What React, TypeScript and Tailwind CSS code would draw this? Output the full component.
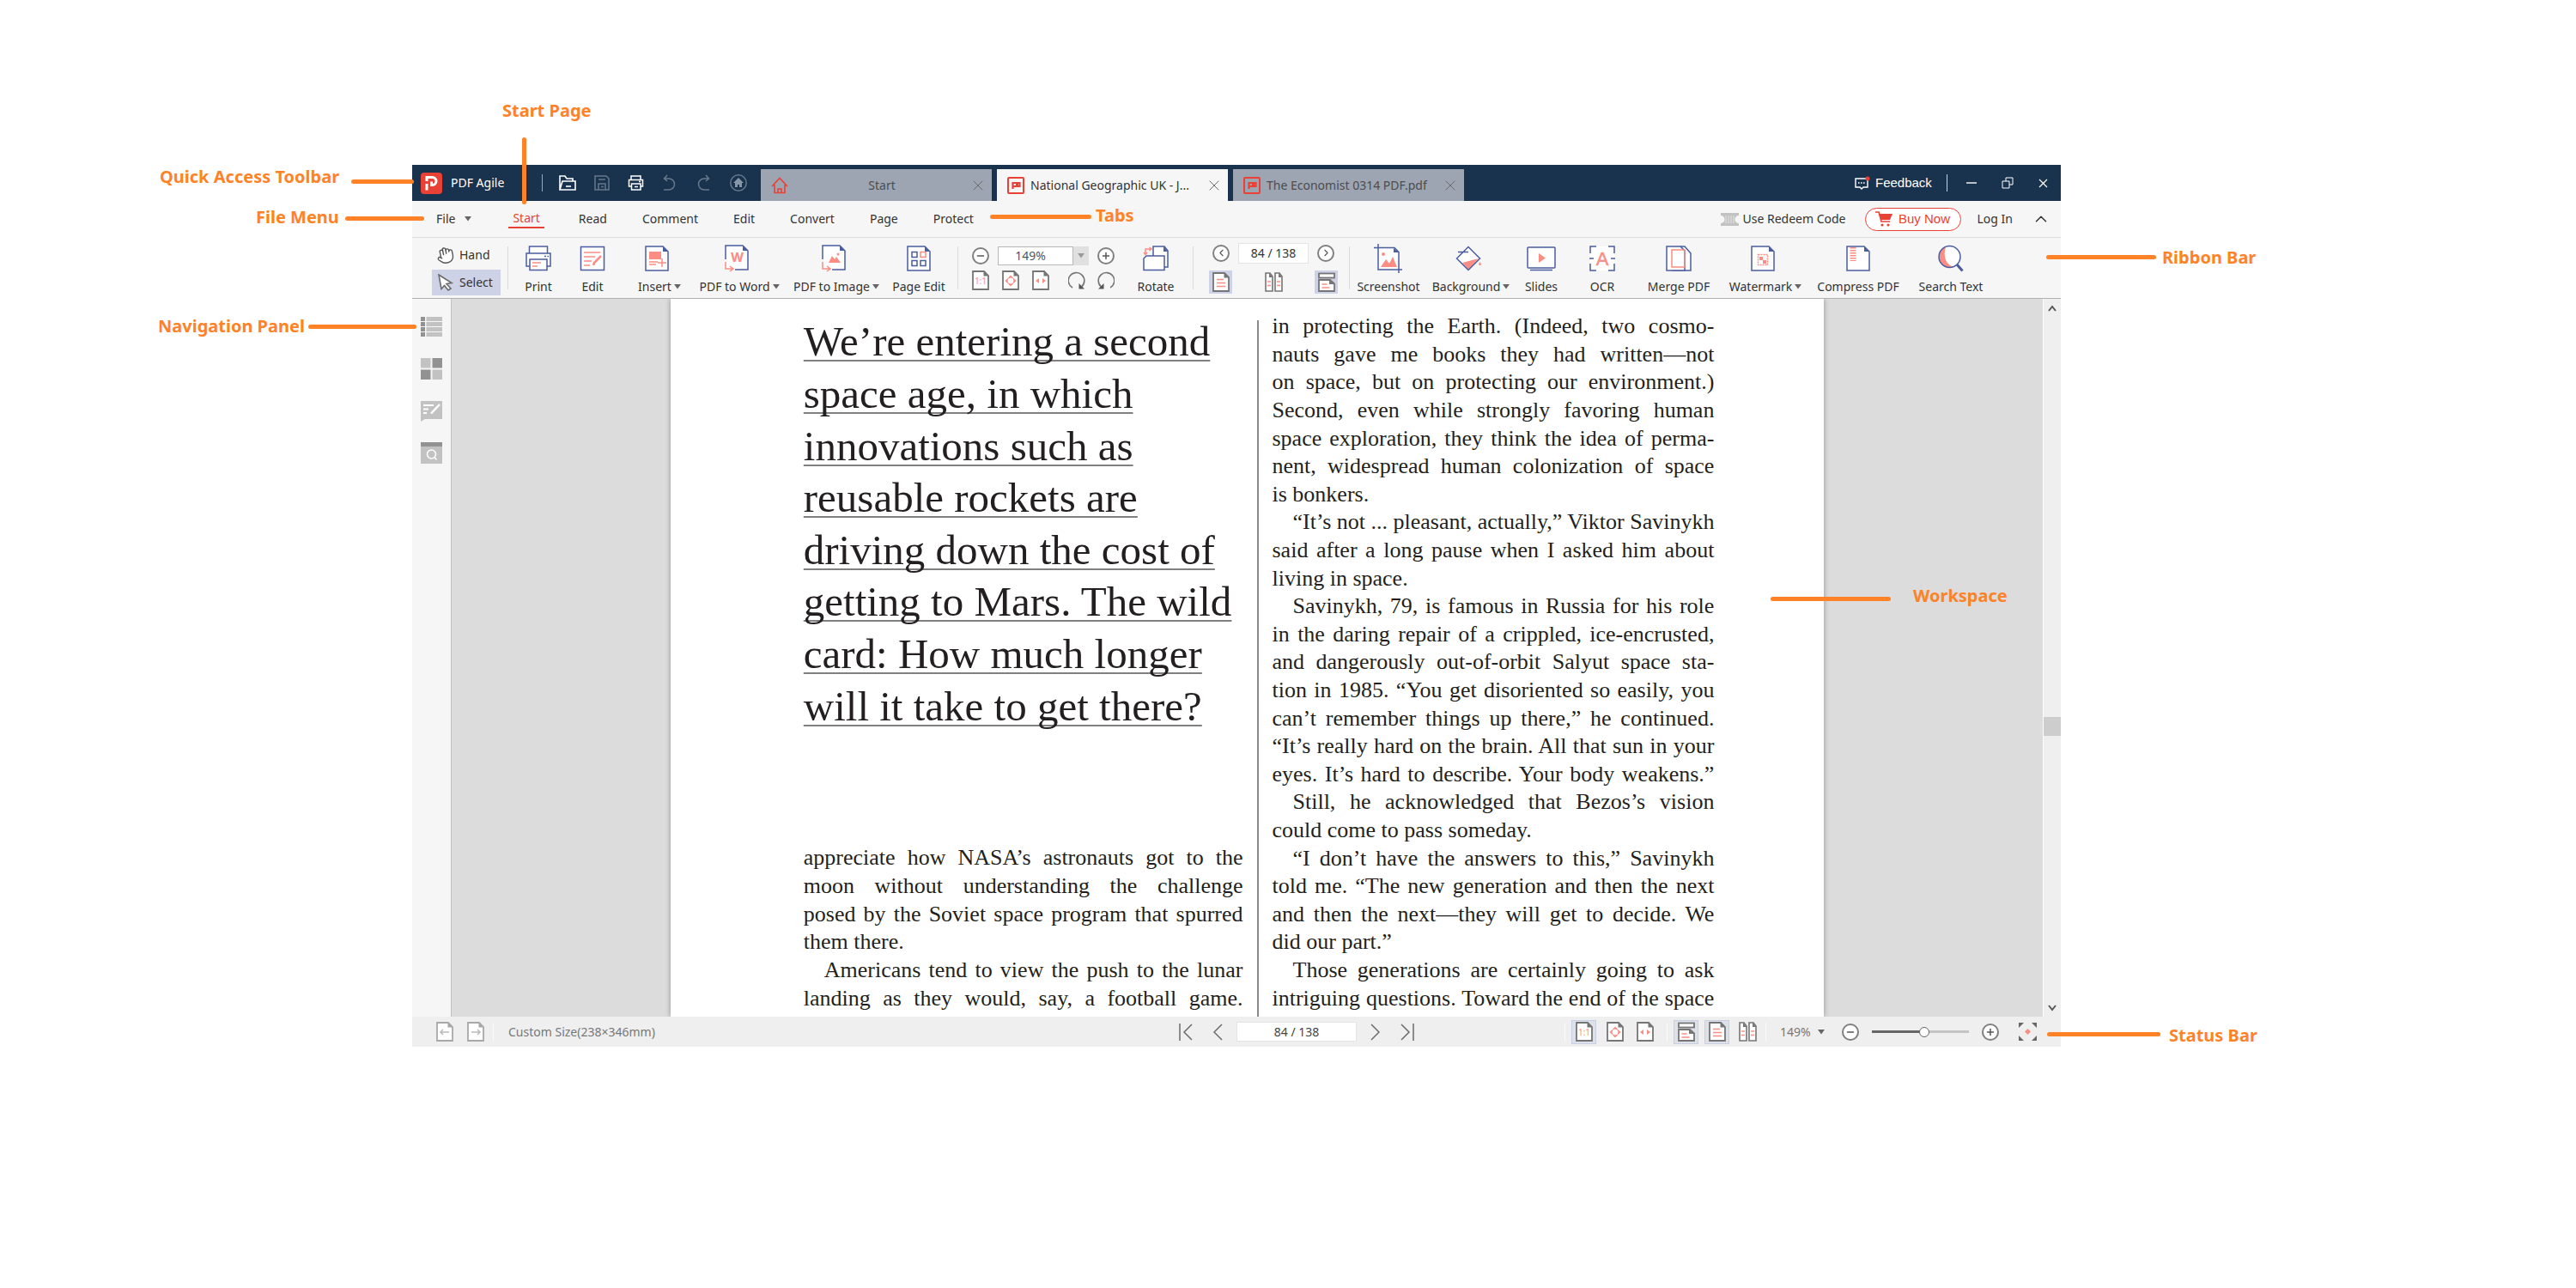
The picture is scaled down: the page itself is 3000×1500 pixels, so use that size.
import React from 'react';
import { ChevronLeft, ChevronRight, ChevronUp, Hand, Minus, Plus, X } from 'lucide-react';

const BLUE = '#4a5d9e';
const PINK = '#fb8d84';
const GREY = '#757575';

type IconProps = { w?: number; h?: number; className?: string; children?: React.ReactNode };

const Svg = ({ w = 30, h = 30, className = '', children }: IconProps) => (
  <svg width={w} height={h} viewBox={`0 0 ${w} ${h}`} fill="none" className={`shrink-0 ${className}`} aria-hidden="true">
    {children}
  </svg>
);

const Caret = ({ className = 'text-[#666]' }: { className?: string }) => (
  <Svg w={8} h={6} className={className}>
    <path d="M0 0h8L4 5.5z" fill="currentColor" />
  </Svg>
);

/* ---------- ribbon icons ---------- */

const BluePage = ({ children }: { children?: React.ReactNode }) => (
  <Svg>
    <path d="M2 1h20l6 6v22H2z" fill="#fff" stroke={BLUE} strokeWidth="1.5" />
    <path d="M22 1v6h6z" fill={BLUE} />
    {children}
  </Svg>
);

const ConvertPage = ({ children }: { children: React.ReactNode }) => (
  <Svg h={32}>
    <path d="M2 17V1h20l6 6v22H13" fill="#fff" stroke={BLUE} strokeWidth="1.5" />
    <path d="M2 17h1v12h10" fill="#fff" />
    <path d="M22 1v6h6z" fill={BLUE} />
    {children}
    <path d="M2 20v8h8M7 25l4 3-4 3" stroke={PINK} strokeWidth="1.5" />
  </Svg>
);

const icons: Record<string, React.ReactNode> = {
  print: (
    <Svg>
      <path d="M4.500 9V1h21v8" fill="#fff" stroke={BLUE} strokeWidth="1.5" />
      <rect x="1" y="9" width="28" height="15" fill="#fff" stroke={BLUE} strokeWidth="1.5" />
      <rect x="5" y="16" width="20" height="12.5" fill="#fff" stroke={BLUE} strokeWidth="1.5" />
      <path d="M8 20h10M8 24h6" stroke={PINK} strokeWidth="1.5" />
      <path d="M22 12.5h2M25.5 12.5h1.5" stroke={BLUE} strokeWidth="1.5" />
    </Svg>
  ),
  edit: (
    <Svg>
      <rect x="1.5" y="1.5" width="27" height="27" fill="#fff" stroke={BLUE} strokeWidth="1.5" />
      <path d="M5 8h19M5 13h13M5 18h9M5 23h7" stroke={PINK} strokeWidth="1.5" />
      <path d="M16 23l1-3 8-8" stroke={PINK} strokeWidth="2.5" />
    </Svg>
  ),
  insert: (
    <BluePage>
      <path d="M6 7h14v9H6z" fill={PINK} />
      <path d="M6 19h10M6 22h8M21 15v10M16 20h10" stroke={PINK} strokeWidth="1.5" />
    </BluePage>
  ),
  word: (
    <ConvertPage>
      <text x="15.5" y="20" textAnchor="middle" fontSize="15" fontWeight="700" fill={PINK} fontFamily="Inter, sans-serif">W</text>
    </ConvertPage>
  ),
  image: (
    <ConvertPage>
      <path d="M9 21l4-8 3 4 2-3 5 7z" fill={PINK} />
      <circle cx="20" cy="11" r="1.5" fill={PINK} />
    </ConvertPage>
  ),
  pageEdit: (
    <BluePage>
      <path d="M7 7.5h6v6H7zM7 17.5h6v6H7zM17 17.5h6v6h-6z" stroke={BLUE} strokeWidth="1.5" />
      <path d="M17 7.5h6v6h-6z" stroke={PINK} strokeWidth="1.5" />
    </BluePage>
  ),
  rotate: (
    <Svg>
      <path d="M12 12V1h13l4 5v19H17" fill="#fff" stroke={BLUE} strokeWidth="1.5" />
      <path d="M24 1v6h5z" fill={BLUE} />
      <path d="M1 28.5V15l3-3h21v16.5z" fill="#fff" stroke={BLUE} strokeWidth="1.5" />
      <path d="M3 10V4h6M1 8l2 2.5L5 8M7.5 2L10 4 7.500 6" stroke={PINK} strokeWidth="1.5" />
    </Svg>
  ),
  screenshot: (
    <Svg w={34} h={34}>
      <path d="M5 5h18l6 6v19H5z" fill="#fff" />
      <path d="M5 0v30h28M0 4.500h24l5 5V34" stroke={BLUE} strokeWidth="1.5" />
      <path d="M23 5v5h6z" fill={BLUE} />
      <path d="M8 27l6-9 4 5 4-8 5 12z" fill={PINK} />
      <circle cx="11" cy="12" r="2" fill={PINK} />
    </Svg>
  ),
  background: (
    <Svg>
      <path d="M1 15L15 1l14 14-14 14z" fill="#fff" />
      <path d="M8 20l19-5-12 13z" fill={PINK} />
      <path d="M1.5 15L15 1.5 28.5 15 15 28.5zM3 7.5h12" stroke={BLUE} strokeWidth="1.5" />
      <path d="M28.500 19c2 3 1.5 4 0 4s-2-1 0-4z" fill={PINK} />
    </Svg>
  ),
  slides: (
    <Svg w={34}>
      <rect x="1" y="2" width="32" height="24" rx="1" fill="#fff" stroke={BLUE} strokeWidth="1.5" />
      <path d="M4 28.5h26" stroke={BLUE} strokeWidth="1.5" />
      <path d="M14 9v11l8-5.5z" fill={PINK} />
    </Svg>
  ),
  ocr: (
    <Svg>
      <path d="M1 1h28v28H1z" fill="#fff" />
      <path d="M1 9V1h7M22 1h7v8M29 21v8h-7M8 29H1v-8M0 15h5M25 15h5" stroke={BLUE} strokeWidth="1.5" />
      <text x="15" y="23" textAnchor="middle" fontSize="22" fill={PINK} stroke={PINK} strokeWidth="0.5" fontFamily="Liberation Sans, sans-serif">A</text>
    </Svg>
  ),
  merge: (
    <Svg>
      <path d="M7 29h22V9l-7-8h-5" fill="#fff" stroke={BLUE} strokeWidth="1.5" />
      <path d="M1 1h16l5 5v23H1z" fill="#fff" stroke={BLUE} strokeWidth="1.5" />
      <path d="M7 5h15v20H7z" stroke={PINK} strokeWidth="1.5" />
    </Svg>
  ),
  watermark: (
    <BluePage>
      <path d="M9.500 10.500h11v12h-11z" stroke={PINK} strokeWidth="1.5" strokeDasharray="2 1" />
      <path d="M11 13h4v4h-4zM15 17h4v4h-4z" fill={PINK} />
    </BluePage>
  ),
  compress: (
    <BluePage>
      <path d="M9 2v16" stroke={PINK} strokeWidth="7" strokeDasharray="1.5 1.5" />
    </BluePage>
  ),
  search: (
    <Svg h={32}>
      <circle cx="13" cy="14" r="12.5" fill="#fff" />
      <path d="M9 2a12.5 12.5 0 1 0 9 23.5C11 24 5 16 9 2z" fill={PINK} />
      <circle cx="13.5" cy="14" r="12.5" stroke={BLUE} strokeWidth="1.5" />
      <path d="M22 23l6.5 7.5" stroke={BLUE} strokeWidth="3" />
    </Svg>
  ),
};

/* ---------- small grey icons ---------- */

const SmallPage = ({ children, muted = false }: { children: React.ReactNode; muted?: boolean }) => (
  <Svg w={20} h={23}>
    <path d="M1 1h13l5 5v16H1z" fill="#fff" stroke={muted ? '#a8a8a8' : GREY} strokeWidth="1.8" />
    <path d="M13.500 1v5.500H19z" fill={muted ? '#a8a8a8' : GREY} />
    {children}
  </Svg>
);

const ActualSize = () => (
  <SmallPage>
    <text x="10" y="16" textAnchor="middle" fontSize="10" fill={PINK} fontFamily="Noto Sans, sans-serif">1:1</text>
  </SmallPage>
);

const FitPage = () => (
  <SmallPage>
    <circle cx="10" cy="12" r="4" stroke={PINK} />
    <path d="M10 5.500l2.500 2.500h-5zM10 18.500L7.500 16h5zM3.500 12L6 9.500v5zM16.500 12L14 9.500v5z" fill={PINK} />
  </SmallPage>
);

const FitWidth = () => (
  <SmallPage>
    <path d="M4 12l4-3v6zM16 12l-4-3v6z" fill={PINK} />
  </SmallPage>
);

const SinglePage = () => (
  <SmallPage>
    <path d="M5 8.500h8M5 12.500h10M5 16.500h10" stroke={PINK} strokeWidth="1.3" />
  </SmallPage>
);

const TwoPages = () => (
  <Svg w={21} h={23}>
    <path d="M1 1h5l3 4v17H1zM12 1h5l3 4v17h-8z" fill="#fff" stroke={GREY} strokeWidth="1.6" />
    <path d="M5 1v5h4zM16 1v5h4z" fill={GREY} />
    <path d="M3 11h4M3 15.500h4M14 11h4M14 15.500h4" stroke={PINK} strokeWidth="1.4" />
  </Svg>
);

const Continuous = () => (
  <Svg w={20} h={23}>
    <rect x="1" y="1.5" width="18" height="5" fill="#fff" stroke={GREY} strokeWidth="1.8" />
    <path d="M1 9h13l5 4.500V22H1z" fill="#fff" stroke={GREY} strokeWidth="1.8" />
    <path d="M13 9v5h6z" fill={GREY} />
    <path d="M4.500 14h6M4.500 18h9" stroke={PINK} strokeWidth="1.4" />
  </Svg>
);

const RotateArrow = ({ flip = false }: { flip?: boolean }) => (
  <Svg w={20} h={21} className={flip ? '-scale-x-100' : ''}>
    <path d="M5 19A9.300 9.300 0 1 1 15.500 18" stroke={GREY} strokeWidth="1.6" />
    <path d="M12.500 14v6.500h6.500z" fill="#555" />
  </Svg>
);

const Round = ({ label, children }: { label: string; children: React.ReactNode }) => (
  <button aria-label={label} className="flex size-5 shrink-0 items-center justify-center rounded-full border-2 border-[#808080] bg-white text-[#555]">
    {children}
  </button>
);

const PdfIcon = () => (
  <Svg w={20} h={20}>
    <rect x="1" y="1" width="18" height="18" rx="1" stroke="#e94135" strokeWidth="2" />
    <path d="M6.500 14V7h8v4h-8M10 9h3" stroke="#e94135" strokeWidth="2.2" />
  </Svg>
);

/* ---------- data ---------- */

const menu = ['Read', 'Comment', 'Edit', 'Convert', 'Page', 'Protect'];

type Tool = { label: string; icon: string; width: string; caret?: boolean };

const convertTools: Tool[] = [
  { label: 'Print', icon: 'print', width: 'w-[62px]' },
  { label: 'Edit', icon: 'edit', width: 'w-[64px]' },
  { label: 'Insert', icon: 'insert', width: 'w-[92px]', caret: true },
  { label: 'PDF to Word', icon: 'word', width: 'w-[94px]', caret: true },
  { label: 'PDF to Image', icon: 'image', width: 'w-[132px]', caret: true },
  { label: 'Page Edit', icon: 'pageEdit', width: 'w-[60px]' },
];

const extraTools: Tool[] = [
  { label: 'Screenshot', icon: 'screenshot', width: 'w-[90px]' },
  { label: 'Background', icon: 'background', width: 'w-[102px]', caret: true },
  { label: 'Slides', icon: 'slides', width: 'w-[62px]' },
  { label: 'OCR', icon: 'ocr', width: 'w-[80px]' },
  { label: 'Merge PDF', icon: 'merge', width: 'w-[98px]' },
  { label: 'Watermark', icon: 'watermark', width: 'w-[104px]', caret: true },
  { label: 'Compress PDF', icon: 'compress', width: 'w-[112px]' },
  { label: 'Search Text', icon: 'search', width: 'w-[104px]' },
];

const quote = [
  'We’re entering a second',
  'space age, in which',
  'innovations such as',
  'reusable rockets are',
  'driving down the cost of',
  'getting to Mars. The wild',
  'card: How much longer',
  'will it take to get there?',
];

// one array per paragraph, one string per printed line; '' marks a paragraph that ends on a full line
const leftText = [
  [
    'appreciate how NASA’s astronauts got to the',
    'moon without understanding the challenge',
    'posed by the Soviet space program that spurred',
    'them there.',
  ],
  ['Americans tend to view the push to the lunar', 'landing as they would, say, a football game.', ''],
];

const rightText = [
  [
    'in protecting the Earth. (Indeed, two cosmo-',
    'nauts gave me books they had written—not',
    'on space, but on protecting our environment.)',
    'Second, even while strongly favoring human',
    'space exploration, they think the idea of perma-',
    'nent, widespread human colonization of space',
    'is bonkers.',
  ],
  ['“It’s not ... pleasant, actually,” Viktor Savinykh', 'said after a long pause when I asked him about', 'living in space.'],
  [
    'Savinykh, 79, is famous in Russia for his role',
    'in the daring repair of a crippled, ice-encrusted,',
    'and dangerously out-of-orbit Salyut space sta-',
    'tion in 1985. “You get disoriented so easily, you',
    'can’t remember things up there,” he continued.',
    '“It’s really hard on the brain. All that sun in your',
    'eyes. It’s hard to describe. Your body weakens.”',
    '',
  ],
  ['Still, he acknowledged that Bezos’s vision', 'could come to pass someday.'],
  [
    '“I don’t have the answers to this,” Savinykh',
    'told me. “The new generation and then the next',
    'and then the next—they will get to decide. We',
    'did our part.”',
  ],
  ['Those generations are certainly going to ask', 'intriguing questions. Toward the end of the space', ''],
];

const callouts = [
  { text: 'Start Page', at: 'left-[585px] top-[115px]', line: 'left-[608px] top-[160px] h-[78px] w-[5px]' },
  { text: 'Quick Access Toolbar', at: 'left-[186px] top-[192px]', line: 'left-[409px] top-[209px] h-[5px] w-[73px]' },
  { text: 'File Menu', at: 'left-[298px] top-[239px]', line: 'left-[402px] top-[252px] h-[5px] w-[92px]' },
  { text: 'Navigation Panel', at: 'left-[184px] top-[366px]', line: 'left-[359px] top-[378px] h-[5px] w-[126px]' },
  { text: 'Tabs', at: 'left-[1276px] top-[237px]', line: 'left-[1153px] top-[250px] h-[5px] w-[118px]' },
  { text: 'Ribbon Bar', at: 'left-[2518px] top-[286px]', line: 'left-[2383px] top-[297px] h-[5px] w-[128px]' },
  { text: 'Workspace', at: 'left-[2228px] top-[680px]', line: 'left-[2062px] top-[695px] h-[5px] w-[140px]' },
  { text: 'Status Bar', at: 'left-[2526px] top-[1192px]', line: 'left-[2384px] top-[1202px] h-[5px] w-[132px]' },
];

/* ---------- sections ---------- */

const ToolButton = ({ tool }: { tool: Tool }) => (
  <button className={`flex h-full flex-col items-center ${tool.width}`}>
    <span className={`flex h-[47px] items-center ${tool.caret ? 'pr-1.5' : ''}`}>{icons[tool.icon]}</span>
    <span className="flex items-center gap-[3px] leading-5 whitespace-nowrap">
      {tool.label}
      {tool.caret && <Caret />}
    </span>
  </button>
);

const Separator = () => <span className="h-[50px] w-px shrink-0 bg-[#dcdcdc]" />;

const DocTab = ({ title, icon, active = false, center = false }: { title: string; icon: React.ReactNode; active?: boolean; center?: boolean }) => (
  <div className={`flex h-[37px] w-[269px] items-center pr-1.5 pl-3 ${active ? 'bg-[#f6f6f6] text-[#333]' : 'bg-[#9ca5b1] text-[#4c4c52]'}`}>
    {icon}
    <button className={`ml-[7px] flex-1 whitespace-nowrap ${center ? 'text-center' : 'text-left'}`}>{title}</button>
    <button aria-label={`Close ${title}`} className="text-[#6b6b6b]">
      <X size={20} strokeWidth={1.2} />
    </button>
  </div>
);

const TitleBar = () => (
  <div className="flex h-[42px] items-center bg-[#19334f] text-white">
    <div className="flex w-[151px] items-center gap-2.5 pl-2.5">
      <span className="flex size-[25px] items-center justify-center rounded bg-[#e94135]">
        <Svg w={17} h={19}>
          <path d="M3 7V2.500h6.500a4.500 4.500 0 0 1 0 9H8.500V7.500M3 10v7.500" stroke="#fff" strokeWidth="3" />
        </Svg>
      </span>
      <span>PDF Agile</span>
    </div>
    <span className="h-5 w-px bg-[#9aa7b5]" />
    <div className="flex flex-1 items-center gap-[21px] pl-[19px]">
      <button aria-label="Open">
        <Svg w={20} h={20}>
          <path d="M1 18V2h6l2 3h7v3M1 18l3-10h15v10z" stroke="#fff" strokeWidth="1.6" />
          <path d="M8 14h6" stroke="#fff" strokeWidth="1.6" />
        </Svg>
      </button>
      <button aria-label="Save">
        <Svg w={18} h={20} className="text-[#67788c]">
          <path d="M1 2h13l3 3v13H1zM5 18v-7h8v7M5 6h8M8 14.500h3" stroke="currentColor" strokeWidth="1.5" />
        </Svg>
      </button>
      <button aria-label="Print">
        <Svg w={20} h={20}>
          <path d="M4 6V2h11v4M4 14H1.500V6.500h16V14H15M4.500 11h10.500v7H4.500zM8 14.500h4M13 8.500h2" stroke="#fff" strokeWidth="1.5" />
        </Svg>
      </button>
      <div className="flex gap-[23px] text-[#67788c]">
        <button aria-label="Undo">
          <Svg w={16} h={20}>
            <path d="M2 5h5a6 6 0 0 1 0 13H1M5 1L1.500 5 5 8" stroke="currentColor" strokeWidth="1.5" />
          </Svg>
        </button>
        <button aria-label="Redo">
          <Svg w={16} h={20}>
            <path d="M14 5H9a6 6 0 0 0 0 13h6M11 1l3.500 4L11 8" stroke="currentColor" strokeWidth="1.5" />
          </Svg>
        </button>
        <button aria-label="Home">
          <Svg w={20} h={20}>
            <circle cx="10" cy="10" r="9.2" stroke="currentColor" strokeWidth="1.5" />
            <path d="M10 4l6 6h-2v5h-3v-3H9v3H6v-5H4z" fill="#8796a6" />
          </Svg>
        </button>
      </div>
    </div>
    <div className="flex w-[1274px] shrink-0 gap-1.5 self-end">
      <DocTab
        title="Start"
        center
        icon={
          <Svg w={20} h={20}>
            <path d="M1 11L10 1.500 19 11M4 9v9.500h12V9M8 18v-4h4v4" stroke="#e94135" strokeWidth="1.6" />
          </Svg>
        }
      />
      <DocTab title="National Geographic UK - J..." icon={<PdfIcon />} active />
      <DocTab title="The Economist 0314 PDF.pdf" icon={<PdfIcon />} />
    </div>
    <div className="flex w-[240px] shrink-0 items-center">
      <button className="flex items-center gap-1.5 font-['Liberation_Sans',sans-serif] text-[15px]">
        <Svg w={18} h={16}>
          <path d="M1 3h14v10h-5l-2 2-2-2H1z" stroke="#fff" strokeWidth="1.4" />
          <path d="M4 8h8" stroke="#fff" strokeWidth="1.6" strokeDasharray="1.6 1.4" />
          <circle cx="15" cy="3" r="2.5" fill="#e94135" />
        </Svg>
        Feedback
      </button>
      <span className="mr-[22px] ml-[17px] h-5 w-px bg-[#c8d0d8]" />
      <button aria-label="Minimize" className="mr-7">
        <Svg w={13} h={12}>
          <path d="M0 6h12" stroke="#fff" strokeWidth="1.4" />
        </Svg>
      </button>
      <button aria-label="Restore" className="mr-[29px]">
        <Svg w={14} h={14}>
          <path d="M1 5h8v8H1zM5 5V1h8v8H9" stroke="#fff" />
        </Svg>
      </button>
      <button aria-label="Close window">
        <Svg w={11} h={11}>
          <path d="M1 1l9 9M10 1l-9 9" stroke="#fff" strokeWidth="1.2" />
        </Svg>
      </button>
    </div>
  </div>
);

const MenuBar = () => (
  <nav className="flex h-[43px] items-center border-b border-[#dcdcdc] bg-[#f6f6f6] pl-7">
    <button className="mr-[43px] flex items-center gap-[11px]">
      File <Caret />
    </button>
    <button className="mr-10 border-b-2 border-[#e94135] px-[5px] text-[#e94135]">Start</button>
    <div className="flex gap-[41px]">
      {menu.map((item) => (
        <button key={item}>{item}</button>
      ))}
    </div>
    <div className="ml-auto flex items-center pr-3">
      <a href="#redeem" className="mr-[22px] flex items-center gap-1">
        <Svg w={21} h={15}>
          <path d="M0 0h21v3a4.500 4.500 0 0 0 0 9v3H0v-3a4.500 4.500 0 0 0 0-9z" fill="#c2c2c2" />
          <path d="M6 3v9M9 3v9M12 3v9M15 3v9" stroke="#e6e6e6" />
        </Svg>
        Use Redeem Code
      </a>
      <button className="mr-[19px] flex h-[27px] w-[112px] items-center justify-center gap-[7px] rounded-full border border-[#e94135] bg-white font-['Liberation_Sans',sans-serif] text-[15px] text-[#e94135]">
        <Svg w={20} h={18}>
          <path d="M0 1h4l3 11h10" stroke="currentColor" strokeWidth="1.6" />
          <path d="M4.500 3H20l-3 7H7z" fill="currentColor" />
          <circle cx="8" cy="16" r="1.6" fill="currentColor" />
          <circle cx="15" cy="16" r="1.6" fill="currentColor" />
        </Svg>
        Buy Now
      </button>
      <button className="mr-[22px]">Log In</button>
      <button aria-label="Collapse ribbon">
        <ChevronUp size={22} strokeWidth={1.6} />
      </button>
    </div>
  </nav>
);

const Ribbon = () => (
  <div className="flex h-[71px] items-center border-b border-[#b0b0b0] bg-[#f6f6f6]">
    <div className="mr-2 ml-[23px] flex w-[80px] flex-col">
      <button className="flex h-[34px] items-center gap-1.5 pl-[5px]">
        <Hand size={21} strokeWidth={1.6} className="-rotate-12 text-[#555]" fill="#fff" />
        Hand
      </button>
      <button className="flex h-[30px] items-center gap-1.5 bg-[#cdd2e6] pl-[5px]">
        <Svg w={21} h={20}>
          <path d="M3 1l15 9.500-6 1 5 5.500-3 2-4.500-5.500-3.500 4z" fill="#fff" stroke="#6b6b6b" strokeWidth="1.6" />
        </Svg>
        Select
      </button>
    </div>
    <Separator />
    <div className="mr-[15px] ml-1 flex h-full">
      {convertTools.map((tool) => (
        <ToolButton key={tool.label} tool={tool} />
      ))}
    </div>
    <Separator />
    <div className="mr-[11px] ml-4 flex w-[166px] flex-col gap-1.5">
      <div className="flex items-center justify-between">
        <Round label="Zoom out"><Minus size={12} strokeWidth={3} /></Round>
        <div className="flex">
          <input aria-label="Zoom" defaultValue="149%" className="h-[22px] w-[88px] border border-[#b8b8b8] bg-white pr-3 text-center text-[#555]" />
          <button aria-label="Zoom levels" className="flex h-[22px] w-[18px] items-center justify-center bg-[#e0e0e0]">
            <Caret className="text-[#999]" />
          </button>
        </div>
        <Round label="Zoom in"><Plus size={12} strokeWidth={3} /></Round>
      </div>
      <div className="flex items-center gap-[15px]">
        <button aria-label="Actual size"><ActualSize /></button>
        <button aria-label="Fit page"><FitPage /></button>
        <button aria-label="Fit width"><FitWidth /></button>
        <div className="ml-auto flex gap-3.5">
          <button aria-label="Rotate clockwise"><RotateArrow /></button>
          <button aria-label="Rotate counterclockwise"><RotateArrow flip /></button>
        </div>
      </div>
    </div>
    <div className="mr-1.5 h-full">
      <ToolButton tool={{ label: 'Rotate', icon: 'rotate', width: 'w-[74px]' }} />
    </div>
    <Separator />
    <div className="mr-[13px] ml-[18px] flex w-[150px] flex-col gap-2">
      <div className="flex items-center justify-between px-1">
        <Round label="Previous page"><ChevronLeft size={13} /></Round>
        <input aria-label="Page number" defaultValue="84 / 138" className="h-6 w-[82px] border border-[#e4e4e4] bg-white text-center" />
        <Round label="Next page"><ChevronRight size={13} /></Round>
      </div>
      <div className="flex items-center justify-between">
        <button aria-label="Single page" className="flex size-[27px] items-center justify-center bg-[#cdd2e6]"><SinglePage /></button>
        <button aria-label="Two pages"><TwoPages /></button>
        <button aria-label="Continuous" className="flex size-[27px] items-center justify-center bg-[#cdd2e6]"><Continuous /></button>
      </div>
    </div>
    <Separator />
    <div className="flex h-full">
      {extraTools.map((tool) => (
        <ToolButton key={tool.label} tool={tool} />
      ))}
    </div>
  </div>
);

const NavigationPanel = () => (
  <aside className="flex w-[46px] shrink-0 flex-col items-center gap-6 border-r border-[#c4c4c4] bg-[#f6f6f6] pt-5">
    <button aria-label="Bookmarks">
      <Svg w={25} h={25}>
        <path d="M0 1h5v5H0zM0 7h5v5H0zM0 13h5v5H0zM0 19h5v5H0z" fill="#929292" />
        <path d="M6.500 1H25v5H6.500zM6.500 7H25v5H6.500zM6.500 13H25v5H6.500zM6.500 19H25v5H6.500z" fill="#c2c2c2" />
      </Svg>
    </button>
    <button aria-label="Thumbnails">
      <Svg w={25} h={25}>
        <path d="M0 0h11.500v11.500H0zM13.500 13.500H25V25H13.500z" fill="#c2c2c2" />
        <path d="M13.500 0H25v11.500H13.500zM0 13.500h11.500V25H0z" fill="#929292" />
      </Svg>
    </button>
    <button aria-label="Comments">
      <Svg w={25} h={25}>
        <path d="M0 1h25v21H5l-5 3z" fill="#c2c2c2" />
        <path d="M3 6h12M3 10.500h6M3 15h4" stroke="#fff" strokeWidth="2" />
        <path d="M12 15.500L22 5" stroke="#fff" strokeWidth="2.5" />
      </Svg>
    </button>
    <button aria-label="Search">
      <Svg w={25} h={25}>
        <path d="M0 0h25v25H0z" fill="#c2c2c2" />
        <path d="M0 0h25v5H0z" fill="#929292" />
        <circle cx="12.5" cy="14" r="5" stroke="#fff" strokeWidth="1.6" />
        <path d="M16 17.500l2.500 3" stroke="#fff" strokeWidth="1.6" />
      </Svg>
    </button>
  </aside>
);

const Column = ({ paragraphs, height }: { paragraphs: string[][]; height: string }) => (
  <div className={`grid auto-rows-fr items-center text-[26px] leading-8 whitespace-nowrap ${height}`}>
    {paragraphs.flatMap((lines, p) =>
      lines.filter(Boolean).map((line, i) => (
        <p
          key={line}
          className={`${i === 0 && p > 0 ? 'pl-6' : ''} ${i < lines.length - 1 ? '[text-align-last:justify]' : ''}`}
        >
          {line}
        </p>
      ))
    )}
  </div>
);

const Document = () => (
  <article className="flex w-[72.5%] bg-white pr-[131px] pl-[155px] font-['Liberation_Serif',serif] text-[#231f20] shadow-[0_0_6px_rgba(0,0,0,0.35)]">
    <section className="flex min-w-0 flex-1 flex-col justify-between pt-5 pb-[5px]">
      <blockquote className="grid h-[485px] auto-rows-fr items-center text-[49px] leading-[60px] whitespace-nowrap">
        {quote.map((line) => (
          <p key={line} className="underline decoration-[#808080] decoration-2 underline-offset-[5px] [text-decoration-skip-ink:none]">
            {line}
          </p>
        ))}
      </blockquote>
      <Column paragraphs={leftText} height="h-[196px]" />
    </section>
    <div className="mx-4 mt-[25px] w-0.5 bg-[#8a8a8a]" />
    <section className="min-w-0 flex-1 pt-4 pb-[5px]">
      <Column paragraphs={rightText} height="h-[815px]" />
    </section>
  </article>
);

const Scrollbar = () => (
  <div className="flex w-[21px] shrink-0 flex-col items-center border-l border-white bg-[#efefef] pt-[7px] pb-1.5 text-[#555]">
    <Svg w={10} h={8}>
      <path d="M1 7l4-5 4 5" stroke="currentColor" strokeWidth="2" />
    </Svg>
    <div className="mt-[472px] h-[22px] w-full bg-[#cdcdcd]" />
    <Svg w={10} h={8} className="mt-auto">
      <path d="M1 1l4 5 4-5" stroke="currentColor" strokeWidth="2" />
    </Svg>
  </div>
);

const StatusSeparator = () => <span className="h-[22px] w-px bg-[#fafafa]" />;

const statusOn = 'flex h-7 w-[29px] items-center justify-center border border-[#c8cfe2] bg-[#dde1ea]';

const StatusBar = () => (
  <footer className="flex h-[35px] items-center bg-[#efefef] pl-7 text-[#444]">
    <button aria-label="Previous view" className="mr-4">
      <SmallPage muted><path d="M5 12h10M8 9l-3 3 3 3" stroke="#bbb" strokeWidth="1.5" /></SmallPage>
    </button>
    <button aria-label="Next view" className="mr-2.5">
      <SmallPage muted><path d="M5 12h10M12 9l3 3-3 3" stroke="#bbb" strokeWidth="1.5" /></SmallPage>
    </button>
    <StatusSeparator />
    <span className="ml-[17px] text-[#777]">Custom Size(238×346mm)</span>
    <div className="mr-[175px] ml-auto flex items-center">
      <button aria-label="First page" className="mr-6">
        <Svg w={16} h={20}><path d="M1 0v20M15 1L6 10l9 9" stroke="#6b6b6b" strokeWidth="1.5" /></Svg>
      </button>
      <button aria-label="Previous page" className="mr-4">
        <Svg w={11} h={20}><path d="M10 1L1 10l9 9" stroke="#6b6b6b" strokeWidth="1.5" /></Svg>
      </button>
      <input aria-label="Current page" defaultValue="84 / 138" className="h-[23px] w-[140px] border border-[#e4e4e4] bg-white text-center" />
      <button aria-label="Next page" className="ml-4">
        <Svg w={11} h={20}><path d="M1 1l9 9-9 9" stroke="#6b6b6b" strokeWidth="1.5" /></Svg>
      </button>
      <button aria-label="Last page" className="ml-6">
        <Svg w={16} h={20}><path d="M15 0v20M1 1l9 9-9 9" stroke="#6b6b6b" strokeWidth="1.5" /></Svg>
      </button>
    </div>
    <div className="flex w-[578px] shrink-0 items-center">
      <StatusSeparator />
      <div className="mx-[7px] flex items-center">
        <button aria-label="Actual size" className={`mr-3 ${statusOn}`}><ActualSize /></button>
        <button aria-label="Fit page" className="mr-[15px]"><FitPage /></button>
        <button aria-label="Fit width" className="mr-2"><FitWidth /></button>
      </div>
      <StatusSeparator />
      <div className="mr-2.5 ml-[7px] flex items-center gap-[7px]">
        <button aria-label="Continuous" className={statusOn}><Continuous /></button>
        <button aria-label="Single page" className={statusOn}><SinglePage /></button>
        <button aria-label="Two pages" className="ml-1"><TwoPages /></button>
      </div>
      <StatusSeparator />
      <label className="ml-4 flex items-center gap-2">
        <select aria-label="Zoom level" className="w-[36px] appearance-none text-[#777]">
          <option>149%</option>
        </select>
        <Caret />
      </label>
      <div className="mr-[23px] ml-5 flex items-center gap-[15px]">
        <Round label="Zoom out"><Minus size={12} strokeWidth={3} /></Round>
        <input
          type="range"
          aria-label="Zoom"
          defaultValue={54}
          className="h-[3px] w-[113px] appearance-none bg-linear-to-r from-[#666] from-54% to-[#c4c4c4] to-54% [&::-webkit-slider-thumb]:size-3 [&::-webkit-slider-thumb]:appearance-none [&::-webkit-slider-thumb]:rounded-full [&::-webkit-slider-thumb]:border [&::-webkit-slider-thumb]:border-[#666] [&::-webkit-slider-thumb]:bg-white"
        />
        <Round label="Zoom in"><Plus size={12} strokeWidth={3} /></Round>
      </div>
      <button aria-label="Full screen">
        <Svg w={21} h={21}>
          <path d="M0 0h6L0 6zM21 0v6l-6-6zM21 21h-6l6-6zM0 21v-6l6 6z" fill="#666" />
          <path d="M10.500 7l3.500 3.500-3.500 3.500L7 10.500z" fill={PINK} />
        </Svg>
      </button>
    </div>
  </footer>
);

const App = () => {
  return (
    <div className="relative w-full bg-white py-48 pr-[20%] pl-[16%] font-['Noto_Sans',sans-serif] text-sm leading-5 text-[#333]">
      <main>
        <TitleBar />
        <MenuBar />
        <Ribbon />
        <div className="flex">
          <NavigationPanel />
          <div className="flex min-w-0 flex-1 justify-center overflow-hidden bg-[#dcdcdc]">
            <Document />
          </div>
          <Scrollbar />
        </div>
        <StatusBar />
      </main>

      {/* Labels and pointers drawn over the window */}
      {callouts.map((callout) => (
        <React.Fragment key={callout.text}>
          <span className={`absolute text-xl leading-7 font-bold whitespace-nowrap text-[#ff8227] ${callout.at}`}>{callout.text}</span>
          <span className={`absolute rounded-full bg-[#ff8227] ${callout.line}`} />
        </React.Fragment>
      ))}
    </div>
  );
};

export default App;
